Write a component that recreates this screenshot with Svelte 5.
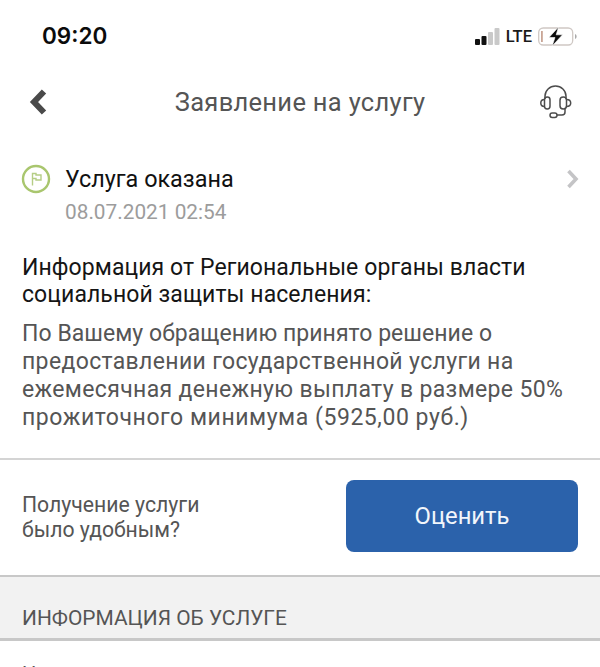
<script>
  const paragraphs = [
    'По Вашему обращению принято решение о',
    'предоставлении государственной услуги на',
    'ежемесячная денежную выплату в размере 50%',
    'прожиточного минимума (5925,00 руб.)'
  ];
</script>

<div class="page">
  <header class="status">
    <span class="time">09:20</span>
    <div class="indicators">
      <svg class="signal" width="25" height="17" viewBox="0 0 25 17">
        <rect x="0" y="11" width="5" height="6" rx="1" fill="#111"/>
        <rect x="6.500" y="8" width="5" height="9" rx="1" fill="#111"/>
        <rect x="13" y="4" width="5" height="13" rx="1" fill="#c9c9c9"/>
        <rect x="19.500" y="0" width="5" height="17" rx="1" fill="#c9c9c9"/>
      </svg>
      <span class="lte">LTE</span>
      <svg width="40" height="19" viewBox="0 0 40 19">
        <rect x="0.700" y="1" width="34" height="17" rx="4.500" fill="none" stroke="#cfc8c4" stroke-width="1.300"/>
        <rect x="3" y="4" width="1.800" height="11" fill="#c9a595"/>
        <path d="M37 7c1.200.4 1.600 1.300 1.600 2.500s-.4 2.100-1.600 2.500z" fill="#aaa"/>
        <path d="M20.500 0 11 10.500h6L14.200 19 24.500 7.800h-6.300z" fill="#0d0d0d" stroke="#fff" stroke-width="0.600"/>
      </svg>
    </div>
  </header>

  <nav class="nav">
    <svg class="back" width="20" height="28" viewBox="0 0 20 28">
      <path d="M16 3.500 6 14l10 10.500" fill="none" stroke="#4a4a4a" stroke-width="6"/>
    </svg>
    <h1>Заявление на услугу</h1>
    <svg class="support" width="32" height="34" viewBox="0 0 32 34" fill="none" stroke="#4d4d4d" stroke-width="1.500">
      <path d="M5 14v-3a10.500 10 0 0 1 21 0v3"/>
      <rect x="4.500" y="12" width="5.500" height="12" rx="2.700"/>
      <path d="M4.500 14.500c-2.500 0-3.700 1.500-3.700 3.500s1.200 3.500 3.700 3.500"/>
      <rect x="20" y="12" width="6.500" height="12" rx="3.200"/>
      <path d="M26.500 14.500c2.800 0 4.200 1.500 4.200 3.500s-1.400 3.500-4.200 3.500"/>
      <path d="M25 24v3c0 2-1 3-3 3h-5"/>
      <rect x="10" y="28" width="7" height="4.500" rx="2.200"/>
    </svg>
  </nav>

  <section class="state">
    <svg class="flag" width="30" height="30" viewBox="0 0 30 30" fill="none">
      <circle cx="15" cy="15" r="13" stroke="#a9c66e" stroke-width="2.400"/>
      <path d="M11.500 21.500V9.500h3.500v1.500h5v5h-5v-1.500h-3.500" stroke="#b5cd85" stroke-width="1.400"/>
    </svg>
    <div class="state-text">
      <div class="state-title">Услуга оказана</div>
      <div class="state-date">08.07.2021 02:54</div>
    </div>
    <svg class="chev" width="14" height="20" viewBox="0 0 14 20">
      <path d="M2.500 2 10 10l-7.500 8" fill="none" stroke="#c4c4c6" stroke-width="3.600"/>
    </svg>
  </section>

  <section class="info">
    <h2>Информация от Региональные органы власти<br />социальной защиты населения:</h2>
    <p>
      {#each paragraphs as line}
        <span>{line}</span>
      {/each}
    </p>
  </section>

  <section class="rate">
    <div class="question">Получение услуги<br />было удобным?</div>
    <button>Оценить</button>
  </section>

  <section class="band">ИНФОРМАЦИЯ ОБ УСЛУГЕ</section>

  <div class="next">Наименование</div>
</div>

<style>
  :global(body) {
    margin: 0;
    background: #fff;
  }
  .page {
    width: 600px;
    height: 667px;
    overflow: hidden;
    font-family: Roboto, "Noto Sans", sans-serif;
    background: #fff;
  }
  .status {
    height: 70px;
    box-sizing: border-box;
    padding: 21px 22px 0 42px;
    display: flex;
    justify-content: space-between;
    align-items: flex-start;
  }
  .time {
    font-family: Inter, sans-serif;
    font-weight: 600;
    font-size: 22.500px;
    line-height: 30px;
    color: #0b0b0b;
  }
  .indicators {
    display: flex;
    align-items: center;
    gap: 6px;
    height: 30px;
  }
  .lte {
    font-family: Roboto, sans-serif;
    font-weight: 500;
    font-size: 16.500px;
    color: #1a1a1a;
  }
  .nav {
    height: 64px;
    position: relative;
    display: flex;
    align-items: center;
    justify-content: space-between;
    padding: 0 28px 0 28px;
  }
  .nav h1 {
    position: absolute;
    left: 0;
    right: 0;
    margin: 0;
    text-align: center;
    font-weight: 400;
    font-size: 25.500px;
    letter-spacing: 0.3px;
    color: #555;
  }
  .state {
    box-sizing: border-box;
    display: flex;
    align-items: flex-start;
    padding: 30px 20px 0 22px;
    height: 120px;
  }
  .flag {
    margin: 0 14px 0 -1px;
    flex: none;
  }
  .state-text {
    flex: 1;
  }
  .state-title {
    font-size: 23.400px;
    line-height: 30px;
    color: #111;
  }
  .state-date {
    font-size: 20.800px;
    line-height: 26px;
    margin-top: 5px;
    color: #9c9c9c;
  }
  .chev {
    margin-top: 5px;
  }
  .info {
    box-sizing: border-box;
    padding: 0 22px;
    height: 204px;
  }
  .info h2 {
    margin: 0;
    font-weight: 400;
    font-size: 23px;
    line-height: 27px;
    letter-spacing: 0.08px;
    color: #151515;
  }
  .info p {
    margin: 12px 0 0;
    font-size: 23px;
    line-height: 28px;
    color: #555;
  }
  .info p span {
    display: block;
    white-space: nowrap;
  }
  .info p span:nth-child(1) {
    letter-spacing: 0.05px;
  }
  .info p span:nth-child(2) {
    letter-spacing: 0.35px;
  }
  .info p span:nth-child(3) {
    letter-spacing: 0.35px;
  }
  .info p span:nth-child(4) {
    letter-spacing: 0.55px;
  }
  .rate {
    border-top: 2px solid #d4d4d4;
    height: 117px;
    box-sizing: border-box;
    display: flex;
    align-items: center;
    justify-content: space-between;
    padding: 0 22px;
  }
  .question {
    font-size: 21.200px;
    line-height: 25px;
    margin-top: -2px;
    color: #555;
  }
  button {
    width: 232px;
    height: 72px;
    margin-top: -3px;
    border: 0;
    border-radius: 8px;
    background: #2b62ab;
    color: #f2f6fb;
    font-family: inherit;
    font-size: 23.800px;
  }
  .band {
    height: 66px;
    box-sizing: border-box;
    background: #f2f2f2;
    border-top: 2px solid #c8c8c8;
    border-bottom: 3px solid #c8c8c8;
    padding: 27px 22px 0;
    font-size: 20.900px;
    line-height: 28px;
    color: #555;
    overflow: hidden;
  }
  .next {
    padding: 21px 22px 0;
    font-size: 20px;
    line-height: 24px;
    color: #555;
  }
</style>
